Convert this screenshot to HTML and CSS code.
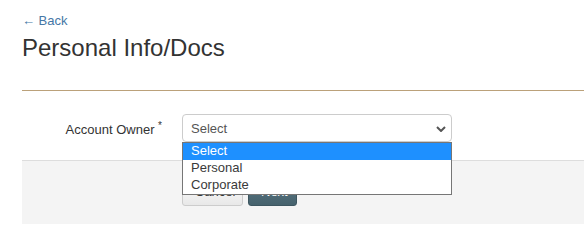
FILE: index.html
```html
<!DOCTYPE html>
<html lang="en">

<head>
    <meta charset="UTF-8">
    <meta name="viewport" content="width=device-width, initial-scale=1.0">
    <title>Personal Info/Docs</title>
    <link rel="stylesheet" href="styles.css">
</head>

<body>
    <div class="page">
        <div class="page-header">
            <a class="back-link" href="#">&larr; Back</a>
            <h1 class="page-title">Personal Info/Docs</h1>
        </div>

        <form class="form">
            <div class="form-row">
                <label class="form-label">Account Owner <span class="required">*</span></label>
                <div class="select-wrap">
                    <div class="select-box">
                        <span class="select-value">Select</span>
                        <svg class="select-arrow" width="10" height="6" viewBox="0 0 10 6">
                            <path d="M1 1 L5 5 L9 1" fill="none" stroke="#555" stroke-width="2" />
                        </svg>
                    </div>
                    <ul class="select-list">
                        <li class="option selected">Select</li>
                        <li class="option">Personal</li>
                        <li class="option">Corporate</li>
                    </ul>
                </div>
            </div>

            <div class="form-actions">
                <button type="button" class="btn btn-cancel">Cancel</button>
                <button type="button" class="btn btn-next">Next</button>
            </div>
        </form>
    </div>
</body>

</html>
```

FILE: styles.css
```css
body {
    margin: 0;
    font-family: "Liberation Sans", Arial, sans-serif;
    font-size: 13px;
    color: #333;
    background-color: #fff;
    overflow: hidden;
}

.page {
    padding: 12px 0 0 22px;
}

.page-header {
    padding-bottom: 29px;
    border-bottom: 1px solid #bba17a;
}

.back-link {
    display: block;
    line-height: 18px;
    color: #4577a6;
    text-decoration: none;
}

.page-title {
    margin: 5px 0 0;
    font-size: 24px;
    font-weight: normal;
    line-height: 26px;
    color: #333;
}

.form-row {
    display: flex;
    align-items: center;
    gap: 20px;
    padding: 23px 0 18px;
}

.form-label {
    width: 140px;
    text-align: right;
    color: #333;
}

.required {
    font-size: 10px;
    vertical-align: 5px;
}

.select-wrap {
    position: relative;
    width: 270px;
}

.select-box {
    display: flex;
    align-items: center;
    justify-content: space-between;
    box-sizing: border-box;
    height: 28px;
    padding: 0 5px 0 8px;
    border: 1px solid #ccc;
    border-radius: 4px;
    color: #555;
    background: #fff;
}

.select-arrow {
    margin-top: 1px;
}

/* open dropdown list */
.select-list {
    position: absolute;
    top: 28px;
    left: 0;
    right: 0;
    margin: 0;
    padding: 0;
    list-style: none;
    border: 1px solid #767676;
    background: #fff;
    z-index: 10;
}

.option {
    height: 17px;
    line-height: 16px;
    padding-left: 8px;
    color: #3a3a3a;
}

.option.selected {
    background-color: #1e90ff;
    color: #fff;
}

.form-actions {
    display: flex;
    gap: 5px;
    padding: 15px 0 18px 160px;
    background-color: #f4f4f4;
    border-top: 1px solid #ddd;
}

.btn {
    height: 30px;
    padding: 0 12px;
    font-family: inherit;
    font-size: 13px;
    border-radius: 3px;
}

.btn-cancel {
    width: 61px;
    color: #333;
    background: linear-gradient(#fff, #e8e8e8);
    border: 1px solid #ccc;
}

.btn-next {
    width: 49px;
    color: #fff;
    background: linear-gradient(#5c7986, #46626d);
    border: 1px solid #3d5660;
}
```
